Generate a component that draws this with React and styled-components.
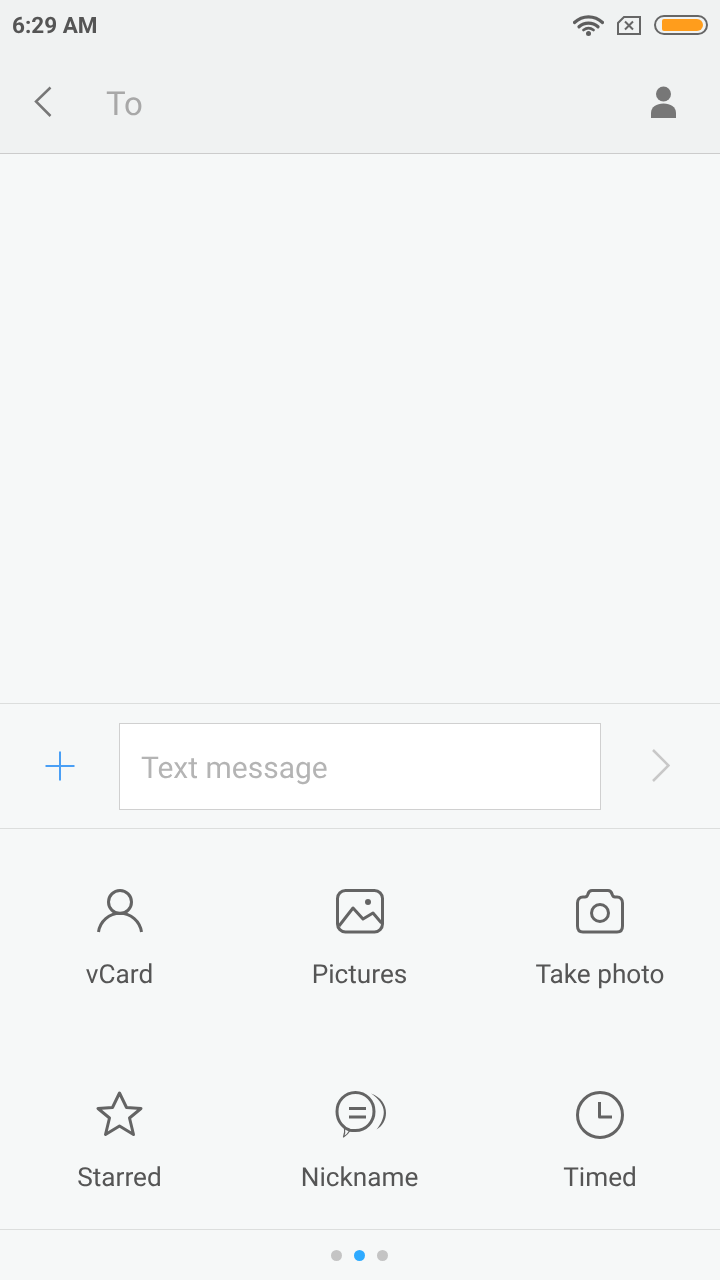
import React from 'react';
import styled, { createGlobalStyle } from 'styled-components';

const GlobalStyle = createGlobalStyle`
  html, body {
    margin: 0;
    padding: 0;
    background: #f6f8f8;
  }
  * {
    box-sizing: border-box;
  }
`;

const actions = [
  {
    label: 'vCard',
    icon: (
      <>
        <circle cx="24" cy="15" r="11.5" />
        <path d="M2.5 45A21.7 21.7 0 0 1 45.5 45" />
      </>
    ),
  },
  {
    label: 'Pictures',
    icon: (
      <>
        <rect x="1.5" y="3.5" width="45" height="41.5" rx="8" />
        <circle cx="32" cy="15" r="3" fill="#646464" stroke="none" />
        <path d="M3 39L17 21L27 32L37 26L45.5 36" />
      </>
    ),
  },
  {
    label: 'Take photo',
    icon: (
      <>
        <path d="M7 10H9C10.5 10 11.3 9 11.8 7.5C12.5 5 13.5 3.5 16 3.5H32C34.5 3.5 35.5 5 36.2 7.5C36.7 9 37.5 10 39 10H41C44.5 10 46.5 12.5 46.5 16V39C46.5 43 44.5 45 41 45H7C3.5 45 1.5 43 1.5 39V16C1.5 12.5 3.5 10 7 10Z" />
        <circle cx="24" cy="26" r="8.5" />
      </>
    ),
  },
  {
    label: 'Starred',
    icon: <path d="M23.5 3L30.5 17.5L45 18.5L33.5 28L37.5 44.5L23.5 36L9.5 44.5L13.5 28L2 18.5L16.5 17.5Z" />,
  },
  {
    label: 'Nickname',
    icon: (
      <>
        <path d="M14 40.2C8 38.5 1 32 1 21.5C1 11 9 2.5 19.5 2.5S38 11 38 21.5S30 40.5 19.5 40.5C17.5 40.5 15.5 40.5 14 40.2Z" />
        <path d="M8.5 38C9 41 8.8 44 7.5 47C10 45.5 12.5 43 14 40.2" strokeWidth="1.2" />
        <path d="M13 18.5H30M13 27H30" />
        <path d="M35 3.5C45 7 50 15 50 23C50 30 46.5 36 40.5 39.5C45 34 47.8 28 47.8 22C47.8 15 42 8 35 3.5Z" fill="#646464" stroke="none" />
      </>
    ),
  },
  {
    label: 'Timed',
    icon: (
      <>
        <circle cx="24" cy="25" r="22.5" />
        <path d="M23.5 12V27H36" />
      </>
    ),
  },
];

const App = () => {
  return (
    <Screen>
      <GlobalStyle />
      <Header>
        <StatusBar>
          <Clock>6:29 AM</Clock>
          <StatusIcons>
            <svg width="31" height="21" viewBox="0 0 31 21" fill="none" stroke="#5e5e5e" strokeLinecap="round">
              <path d="M1.5 7.5C9.5 0 21.5 0 29.5 7.5" strokeWidth="3.2" />
              <path d="M6 11.8C11.5 6.8 19.5 6.8 25 11.8" strokeWidth="3.2" />
              <path d="M10.5 15C13.5 12.7 17.5 12.7 20.5 15" strokeWidth="2.8" />
              <circle cx="15.5" cy="18.5" r="2.5" fill="#5e5e5e" stroke="none" />
            </svg>
            <svg width="24" height="19" viewBox="0 0 24 19" fill="none" stroke="#666" strokeWidth="2">
              <path d="M7 1H23V18H1V7Z" />
              <path d="M8 5.5L16 13.5M16 5.5L8 13.5" />
            </svg>
            <Battery>
              <BatteryLevel />
            </Battery>
          </StatusIcons>
        </StatusBar>
        <NavBar>
          <BackIcon width="18" height="32" viewBox="0 0 18 32" fill="none" stroke="#777" strokeWidth="2.5">
            <path d="M16.5 1.5L2 15.5L16.5 30" />
          </BackIcon>
          <Title>To</Title>
          <svg width="27" height="32" viewBox="0 0 27 32" fill="#777">
            <circle cx="13.5" cy="8" r="7.5" />
            <path d="M1 32V27C1 21 6.5 17.5 13.5 17.5S26 21 26 27V32Z" />
          </svg>
        </NavBar>
      </Header>
      <Messages />
      <Composer>
        <PlusIcon width="30" height="30" viewBox="0 0 30 30" stroke="#4a9ff5" strokeWidth="2">
          <path d="M15 0.5V29.5M0.5 15H29.5" />
        </PlusIcon>
        <MessageBox>
          <MessageText>Text message</MessageText>
        </MessageBox>
        <SendIcon width="18" height="33" viewBox="0 0 18 33" fill="none" stroke="#c8c8c8" strokeWidth="2.5">
          <path d="M1 1L16.5 16.5L1 32" />
        </SendIcon>
      </Composer>
      <ActionGrid>
        {actions.map((action) => (
          <Action key={action.label}>
            <ActionIcon viewBox="0 0 48 48">{action.icon}</ActionIcon>
            <ActionLabel>{action.label}</ActionLabel>
          </Action>
        ))}
      </ActionGrid>
      <Pager>
        <Dot />
        <Dot $active />
        <Dot />
      </Pager>
    </Screen>
  );
};

const Screen = styled.div`
  width: 720px;
  height: 1280px;
  display: flex;
  flex-direction: column;
  overflow: hidden;
  font-family: Roboto, "Liberation Sans", sans-serif;
  text-rendering: geometricPrecision;
  will-change: transform;
`;

const Header = styled.header`
  height: 154px;
  background: #f0f2f2;
  border-bottom: 1px solid #cccccc;
`;

const StatusBar = styled.div`
  height: 50px;
  padding: 0 12px;
  display: flex;
  align-items: center;
  justify-content: space-between;
`;

const Clock = styled.span`
  margin-top: 2px;
  font-size: 22.5px;
  font-weight: 700;
  color: #555555;
`;

const StatusIcons = styled.div`
  display: flex;
  align-items: center;
  gap: 13px;
`;

const Battery = styled.div`
  width: 54px;
  height: 20px;
  padding: 2px 3px 2px 6px;
  border: 2px solid #666666;
  border-radius: 10px;
`;

const BatteryLevel = styled.div`
  height: 100%;
  background: #ff9d1c;
  border-radius: 2px 6px 6px 2px;
`;

const NavBar = styled.div`
  height: 103px;
  padding: 0 43px 0 34px;
  display: flex;
  align-items: center;
`;

const BackIcon = styled.svg`
  margin-right: 54px;
`;

const Title = styled.h1`
  flex: 1;
  margin: 6px 0 0;
  font-size: 33px;
  font-weight: 400;
  color: #a8a8a8;
`;

const Messages = styled.main`
  height: 550px;
  border-bottom: 1px solid #dcdedd;
`;

const Composer = styled.div`
  height: 125px;
  display: flex;
  align-items: center;
  border-bottom: 1px solid #dcdedd;
`;

const PlusIcon = styled.svg`
  margin: 0 44px 0 45px;
`;

const MessageBox = styled.div`
  width: 482px;
  height: 87px;
  padding-left: 21px;
  display: flex;
  align-items: center;
  background: #ffffff;
  border: 1px solid #d0d0d0;
`;

const MessageText = styled.span`
  margin-top: 4px;
  font-size: 30px;
  color: #b4b4b4;
`;

const SendIcon = styled.svg`
  margin: -2px 0 0 51px;
`;

const ActionGrid = styled.section`
  height: 401px;
  padding-top: 58px;
  display: grid;
  grid-template-columns: 239px 241px 240px;
  grid-auto-rows: 203px;
  border-bottom: 1px solid #dcdedd;
`;

const Action = styled.div`
  display: flex;
  flex-direction: column;
  align-items: center;
`;

const ActionIcon = styled.svg`
  width: 48px;
  height: 48px;
  overflow: visible;
  fill: none;
  stroke: #646464;
  stroke-width: 3;
  stroke-linejoin: round;
`;

const ActionLabel = styled.span`
  margin-top: 22px;
  font-size: 26.2px;
  line-height: 36px;
  color: #555555;
`;

const Pager = styled.nav`
  height: 50px;
  padding-right: 1px;
  display: flex;
  align-items: center;
  justify-content: center;
  gap: 12px;
`;

const Dot = styled.span`
  width: 11px;
  height: 11px;
  border-radius: 50%;
  background: ${(props) => (props.$active ? '#2eaaff' : '#c4c4c4')};
`;

export default App;
